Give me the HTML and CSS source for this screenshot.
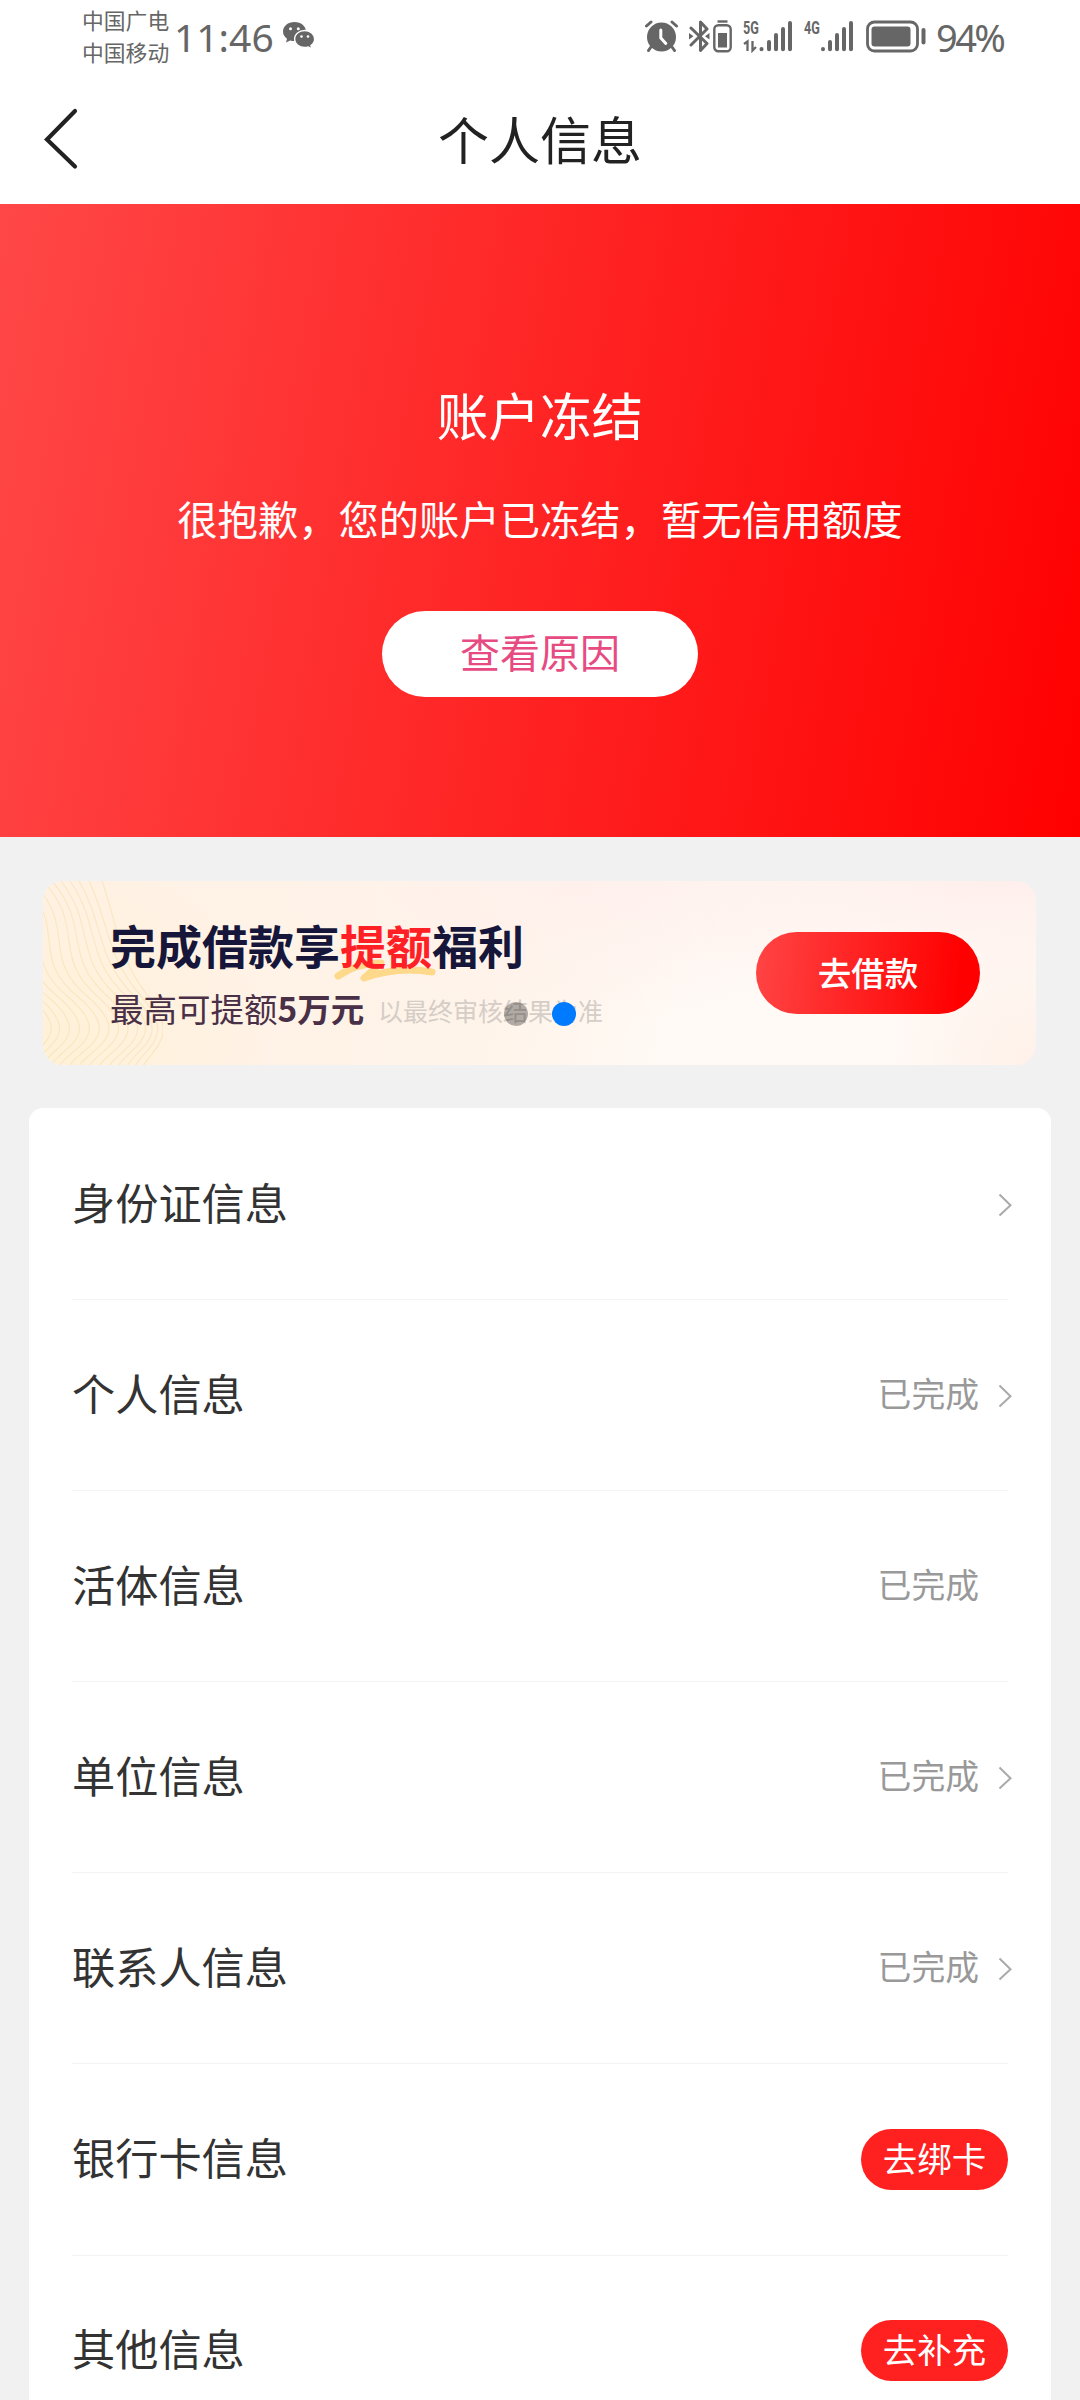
FILE: index.html
```html
<!DOCTYPE html>
<html lang="zh-CN">
<head>
<meta charset="utf-8">
<title>个人信息</title>
<link rel="stylesheet" href="styles.css">
</head>
<body>
<div class="status-bar">
  <div class="carriers"><span>中国广电</span><span>中国移动</span></div>
  <span class="clock">11:46</span>
  <svg class="wechat" width="32" height="28" viewBox="0 0 32 28">
    <path fill="#666" d="M11.500 0C5 0 0 4.200 0 9.600c0 3 1.600 5.500 4 7.200L3 20.500l4.200-2.100c1.500.5 2.800.6 4.300.6C18 19 23 15 23 9.600S18 0 11.500 0z"/>
    <path fill="#666" stroke="#fff" stroke-width="1.300" d="M21.600 8.500c-5.600 0-10 3.700-10 8.500s4.400 8.500 10 8.500c1.300 0 2.400-.2 3.600-.6l3.600 2-.9-3.300c2.300-1.600 3.700-3.900 3.700-6.600 0-4.800-4.400-8.500-10-8.500z"/>
    <g fill="#fff"><circle cx="7.500" cy="6.800" r="1.500"/><circle cx="15.300" cy="6.800" r="1.500"/><circle cx="18.500" cy="14.500" r="1.300"/><circle cx="25" cy="14.500" r="1.300"/></g>
  </svg>
  <div class="indicators">
    <svg class="alarm" width="34" height="32" viewBox="0 0 34 32">
      <circle cx="16.500" cy="17" r="14.500" fill="#666"/>
      <path d="M1.500 6 6 2M31.500 6 27 2M6 27l-2.500 3.500M27 27l2.500 3.500" stroke="#666" stroke-width="3" stroke-linecap="round"/>
      <path d="M15.800 10v8l5 5.500" fill="none" stroke="#fff" stroke-width="3" stroke-linecap="round" stroke-linejoin="round"/>
    </svg>
    <svg class="bluetooth" width="21" height="33" viewBox="0 0 21 33">
      <path d="M2 8l16 15.500-6.500 7V2L18 9 2 25" fill="none" stroke="#666" stroke-width="3" stroke-linejoin="round" stroke-linecap="round"/>
      <path d="M0 13l4.500 3.200L0 19.500zM20.500 13l-4.500 3.200 4.500 3.300z" fill="#666"/>
    </svg>
    <svg class="mini-battery" width="19" height="33" viewBox="0 0 19 33">
      <path d="M4.500 1.500h10" stroke="#666" stroke-width="2.400"/>
      <rect x="1.300" y="5.300" width="16.400" height="26" rx="4" fill="none" stroke="#666" stroke-width="2.400"/>
      <rect x="5" y="13" width="9" height="14.500" fill="#666"/>
    </svg>
    <div class="signal">
      <span class="net">5G</span>
      <svg width="50" height="33" viewBox="0 0 50 33">
        <path d="M1 24l3.500-2.500V31M9.500 21v9.500L13 27" fill="none" stroke="#666" stroke-width="2.300"/>
        <g stroke="#666" stroke-width="4" stroke-linecap="round"><path d="M18.500 29v.2M26 22v7.300M33 15v14.300M40 9v20.300M47 3v26.300"/></g>
      </svg>
    </div>
    <div class="signal">
      <span class="net">4G</span>
      <svg width="50" height="33" viewBox="0 0 50 33">
        <g stroke="#666" stroke-width="4" stroke-linecap="round"><path d="M19 29v.2M26 22v7.300M33 15v14.300M40 9v20.300M47 3v26.300"/></g>
      </svg>
    </div>
    <svg class="battery" width="60" height="33" viewBox="0 0 60 33">
      <rect x="1.500" y="2" width="50" height="29" rx="7" fill="none" stroke="#666" stroke-width="2.800"/>
      <rect x="5.500" y="6.500" width="39" height="20" rx="3" fill="#666"/>
      <path d="M57.500 10v12.500" stroke="#666" stroke-width="4" stroke-linecap="round"/>
    </svg>
    <span class="percent">94%</span>
  </div>
</div>
<header class="nav">
  <svg class="back" width="36" height="64" viewBox="0 0 36 64"><path d="M32 5 4 33.500l28 27" fill="none" stroke="#222" stroke-width="4.200" stroke-linecap="round"/></svg>
  <h1>个人信息</h1>
</header>
<section class="hero">
  <h2>账户冻结</h2>
  <p>很抱歉，您的账户已冻结，暂无信用额度</p>
  <a class="reason">查看原因</a>
</section>
<section class="banner">
  <svg class="waves" width="120" height="185" viewBox="0 0 120 185" fill="none" stroke="#f7e3b8" stroke-opacity="0.700" stroke-width="1.200">
    <path d="M-68 0C-20 50-65 75-15 115S-10 165-20 185M-59 0C-10 50-54 75-6 115S0 165-11 185M-50 0C-1 50-44 75 4 115S10 165-2 185M-41 0C8 50-34 75 14 115S20 165 7 185M-30 0C17 50-24 75 24 115S30 165 16 185M-20 0C26 50-14 75 34 115S40 165 26 185M-10 0C35 50-3 75 44 115S50 165 36 185M0 0C43 45 8 75 54 115S60 165 46 185M9 0C48 45 19 75 64 115S70 165 56 185M18 0C53 45 30 75 74 115S80 165 66 185M27 0C58 45 41 75 83 115S88 165 75 185M36 0C62 45 52 75 91 115S96 165 84 185M46 0C67 45 63 75 98 115S104 165 92 185M59 0C75 45 74 75 105 115S112 165 100 185"/>
  </svg>
  <div class="offer">
    <div class="offer-title">完成借款享<span class="accent"><svg class="brush" width="102" height="25" viewBox="0 0 102 25"><path d="M4 17Q23 4 47 4L30 19Q64 7 98 13" fill="none" stroke="#fed98c" stroke-width="7" stroke-linecap="round" stroke-linejoin="round"/></svg><span class="accent-text">提额</span></span>福利</div>
    <div class="offer-sub"><span class="limit">最高可提额<b>5万元</b></span><span class="note">以最终审核结果为准</span></div>
  </div>
  <a class="borrow">去借款</a>
  <div class="dots"><i class="dot"></i><i class="dot active"></i></div>
</section>
<main class="list">
  <div class="row"><span class="label">身份证信息</span><svg class="chevron" width="14" height="24" viewBox="0 0 14 24"><path d="M1.500 1.500 12.500 12.200 1.500 22.500"/></svg></div>
  <div class="row"><span class="label">个人信息</span><span class="state">已完成</span><svg class="chevron" width="14" height="24" viewBox="0 0 14 24"><path d="M1.500 1.500 12.500 12.200 1.500 22.500"/></svg></div>
  <div class="row"><span class="label">活体信息</span><span class="state last">已完成</span></div>
  <div class="row"><span class="label">单位信息</span><span class="state">已完成</span><svg class="chevron" width="14" height="24" viewBox="0 0 14 24"><path d="M1.500 1.500 12.500 12.200 1.500 22.500"/></svg></div>
  <div class="row"><span class="label">联系人信息</span><span class="state">已完成</span><svg class="chevron" width="14" height="24" viewBox="0 0 14 24"><path d="M1.500 1.500 12.500 12.200 1.500 22.500"/></svg></div>
  <div class="row"><span class="label">银行卡信息</span><a class="pill">去绑卡</a></div>
  <div class="row"><span class="label">其他信息</span><a class="pill">去补充</a></div>
</main>
</body>
</html>
```
FILE: styles.css
```css
* { box-sizing: border-box; }
body {
  margin: 0;
  width: 1080px;
  height: 2400px;
  overflow: hidden;
  background: #f1f1f1;
  font-family: "Noto Sans CJK SC", sans-serif;
  color: #333;
}
h1, h2, p { margin: 0; font-weight: 400; }
svg { flex: none; display: block; }

.status-bar {
  display: flex;
  align-items: flex-start;
  height: 76px;
  padding-left: 82px;
  background: #fff;
  color: #666;
}
.carriers {
  display: flex;
  flex-direction: column;
  width: 92px;
  padding-top: 4px;
  font-size: 21.800px;
  line-height: 32px;
  white-space: nowrap;
}
.clock, .percent {
  font-family: "Noto Sans", sans-serif;
  font-size: 39px;
  line-height: 54px;
  padding-top: 10px;
  white-space: nowrap;
}
.clock { width: 109px; }
.wechat { margin-top: 22px; }
.indicators {
  display: flex;
  margin-left: 330px;
  padding-top: 20px;
}
.bluetooth { margin-left: 10px; }
.mini-battery { margin-left: 3px; }
.signal { position: relative; margin-left: 11px; }
.battery { margin-left: 12px; }
.net {
  position: absolute;
  left: 0;
  top: -3px;
  font: 700 18px/22px "Roboto", sans-serif;
  transform: scaleX(0.700);
  transform-origin: 0 0;
}
.percent {
  margin-left: 10px;
  padding-top: 0;
  margin-top: -10px;
  font-size: 38px;
  letter-spacing: -2.600px;
}

.nav {
  display: flex;
  align-items: center;
  height: 128px;
  padding-left: 43px;
  background: #fff;
}
.back { margin-bottom: 4px; }
.nav h1 {
  flex: 1;
  margin-right: 79px;
  padding-bottom: 5px;
  text-align: center;
  font-size: 51px;
  line-height: 70px;
  color: #222;
}

.hero {
  display: flex;
  flex-direction: column;
  align-items: center;
  height: 633px;
  padding-top: 178px;
  background: linear-gradient(100deg, #ff4747, #ff0000);
  color: #fff;
}
.hero h2 { font-size: 51.600px; line-height: 64px; }
.hero p { margin-top: 42px; font-size: 40.300px; line-height: 60px; }
.reason {
  width: 316px;
  height: 86px;
  margin-top: 63px;
  border-radius: 43px;
  background: #fff;
  color: #e64b82;
  text-align: center;
  font-size: 40px;
  line-height: 81px;
}

.banner {
  position: relative;
  display: flex;
  justify-content: space-between;
  width: 993px;
  height: 184px;
  margin: 44px 0 0 43px;
  padding: 0 56px 0 67px;
  border-radius: 20px;
  overflow: hidden;
  background:
    radial-gradient(circle at 0 100%, #fff1d6, rgba(255, 241, 214, 0) 240px),
    radial-gradient(ellipse 300px 150px at 54% 0, #fff0ec, rgba(255, 240, 236, 0)),
    radial-gradient(ellipse 420px 110px at 96% 0, #ffefec, rgba(255, 239, 236, 0)),
    radial-gradient(circle at 100% 100%, #fff1e9, rgba(255, 241, 233, 0) 150px),
    linear-gradient(100deg, #fff1e6, #fff4e9 45%, #fffaf6 65%, #fff9f5);
}
.waves { position: absolute; left: 0; top: 0; }
.offer { position: relative; padding-top: 32px; white-space: nowrap; }
.offer-title {
  font-size: 46px;
  line-height: 62px;
  font-weight: 700;
  color: #15163a;
}
.accent { position: relative; color: #ff2026; }
.accent-text { position: relative; }
.brush { position: absolute; left: -6px; top: 48px; }
.offer-sub {
  display: flex;
  align-items: center;
  color: #493047;
  line-height: 48px;
  padding-top: 7px;
}
.limit { width: 268px; font-size: 33.500px; }
.note { padding-top: 4px; font-size: 25px; color: #d5cdc7; }
.borrow {
  width: 224px;
  height: 82px;
  margin-top: 51px;
  border-radius: 41px;
  background: linear-gradient(95deg, #ff4444, #ff0000 90%);
  color: #fff;
  text-align: center;
  font-size: 33.500px;
  font-weight: 500;
  line-height: 79px;
}
.dots {
  position: absolute;
  left: 461px;
  top: 121px;
  display: flex;
  gap: 24px;
}
.dot {
  width: 24px;
  height: 24px;
  border-radius: 50%;
  background: rgba(0, 0, 0, 0.300);
}
.dot.active { background: #007aff; }

.list {
  width: 1022px;
  height: 1340px;
  margin: 43px 0 0 29px;
  padding: 1px 43px 0;
  border-radius: 14px;
  background: #fff;
}
.row {
  display: flex;
  align-items: center;
  width: 936px;
  height: 191.100px;
  border-bottom: 1px solid #f3f3f3;
}
.label {
  flex: 1;
  padding-bottom: 7px;
  font-size: 43.200px;
  line-height: 60px;
}
.state {
  margin-right: 19px;
  padding-bottom: 4px;
  font-size: 33.800px;
  line-height: 48px;
  color: #999;
}
.state.last { margin-right: 29px; }
.chevron {
  margin: 2px -4px 0 0;
  fill: none;
  stroke: #aaa;
  stroke-width: 2;
}
.pill {
  width: 147px;
  height: 61px;
  border-radius: 31px;
  background: #ff2020;
  color: #fff;
  text-align: center;
  font-size: 34.500px;
  line-height: 56px;
}
```
